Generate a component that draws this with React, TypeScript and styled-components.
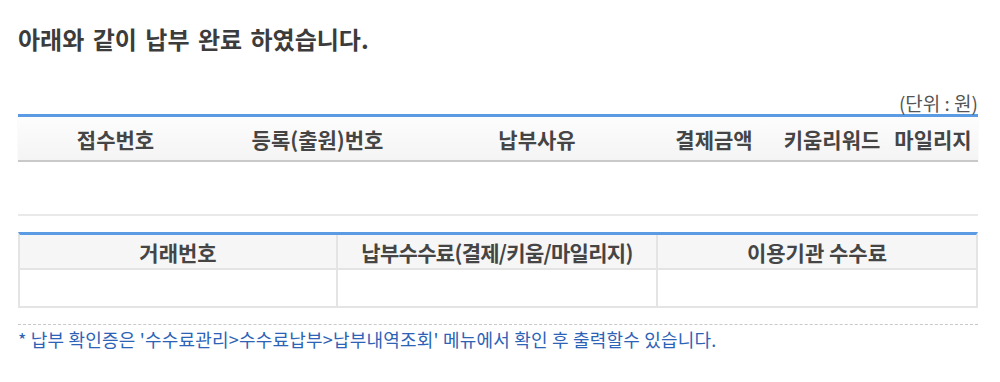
import React from "react";
import styled, { createGlobalStyle } from "styled-components";

const Global = createGlobalStyle`
  html, body { margin: 0; padding: 0; background: #fff; }
  body { font-family: "Noto Sans CJK KR", "Noto Sans", sans-serif; }
`;

const Page = styled.div`
  width: 960px;
  padding: 22px 22px 0 18px;
`;

const Title = styled.h2`
  margin: 0;
  font-size: 24px;
  line-height: 34px;
  font-weight: 700;
  color: #3c3c3c;
  word-spacing: 3px;
`;

const Unit = styled.div`
  margin-top: 36px;
  text-align: right;
  font-size: 19px;
  line-height: 22px;
  color: #555;
`;

const SummaryTable = styled.div`
  border-top: 3px solid #5a9be4;
`;

const SummaryRow = styled.div<{ $head?: boolean }>`
  display: grid;
  grid-template-columns: 195px 209px 230px 124px 112px 90px;
  height: ${(p) => (p.$head ? "43px" : "52px")};
  align-items: center;
  background: ${(p) => (p.$head ? "linear-gradient(#fdfdfd, #f4f4f4)" : "#fff")};
  border-bottom: 2px solid ${(p) => (p.$head ? "#c9c9c9" : "#e9e9e9")};
  box-shadow: ${(p) => (p.$head ? "0 2px 2px rgba(0,0,0,0.05)" : "none")};
`;

const HeadCell = styled.div`
  text-align: center;
  font-size: 21px;
  font-weight: 700;
  color: #454545;
  white-space: nowrap;
`;

const FeeTable = styled.div`
  margin-top: 16px;
  border-top: 3px solid #5a9be4;
  border-left: 2px solid #e4e4e4;
  border-right: 2px solid #e4e4e4;
  border-bottom: 2px solid #e4e4e4;
`;

const FeeRow = styled.div<{ $head?: boolean }>`
  display: grid;
  grid-template-columns: 318px 320px 318px;
  height: ${(p) => (p.$head ? "33px" : "36px")};
  background: ${(p) => (p.$head ? "#f6f6f6" : "#fff")};
  border-bottom: ${(p) => (p.$head ? "2px solid #e4e4e4" : "none")};
`;

const FeeCell = styled.div<{ $last?: boolean }>`
  display: flex;
  align-items: center;
  justify-content: center;
  border-right: ${(p) => (p.$last ? "none" : "2px solid #e4e4e4")};
  font-size: 21px;
  font-weight: 700;
  color: #454545;
  white-space: nowrap;
`;

const Narrow = styled.span`
  letter-spacing: -0.7px;
`;

const Divider = styled.div`
  margin-top: 16px;
  border-top: 1px dashed #c9c9c9;
`;

const Note = styled.p`
  margin: 2px 0 0;
  font-size: 18px;
  line-height: 24px;
  color: #2d63b6;
  letter-spacing: 0.2px;
`;

const summaryHeads = ["접수번호", "등록(출원)번호", "납부사유", "결제금액", "키움리워드", "마일리지"];

export default function App() {
  return (
    <>
      <Global />
      <Page>
        <Title>아래와 같이 납부 완료 하였습니다.</Title>
        <Unit>(단위 : 원)</Unit>
        <SummaryTable>
          <SummaryRow $head>
            {summaryHeads.map((h) => (
              <HeadCell key={h}>{h}</HeadCell>
            ))}
          </SummaryRow>
          <SummaryRow />
        </SummaryTable>
        <FeeTable>
          <FeeRow $head>
            <FeeCell>거래번호</FeeCell>
            <FeeCell>
              <Narrow>납부수수료(결제/키움/마일리지)</Narrow>
            </FeeCell>
            <FeeCell $last>이용기관 수수료</FeeCell>
          </FeeRow>
          <FeeRow>
            <FeeCell />
            <FeeCell />
            <FeeCell $last />
          </FeeRow>
        </FeeTable>
        <Divider />
        <Note>
          * 납부 확인증은 '수수료관리&gt;수수료납부&gt;납부내역조회' 메뉴에서 확인 후 출력할수 있습니다.
        </Note>
      </Page>
    </>
  );
}
